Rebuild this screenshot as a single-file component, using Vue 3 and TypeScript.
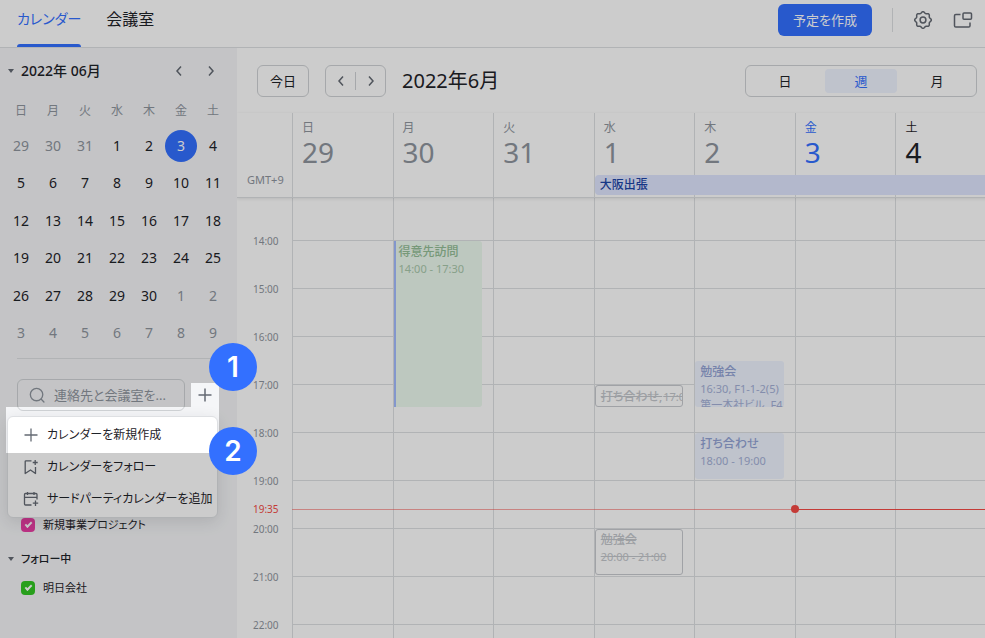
<script setup lang="ts">
import { ref } from 'vue'

interface CalEvent {
  title: string
  lines: string[]
  start: number
  end: number
  kind: 'green' | 'blue' | 'declined'
  compact?: boolean
}
interface Day {
  name: string
  num: number
  state: 'past' | 'today' | 'future'
  events: CalEvent[]
}

const weekNames = ['日', '月', '火', '水', '木', '金', '土']
const firstHour = 14
const hours = [14, 15, 16, 17, 18, 19, 20, 21, 22]

const miniDays = Array.from({ length: 42 }, (_, i) => {
  const offset = i - 2
  const num = offset < 1 ? offset + 31 : offset > 30 ? offset - 30 : offset
  return { key: i, num, other: offset < 1 || offset > 30, today: offset === 3 }
})

const days: Day[] = [
  { name: '日', num: 29, state: 'past', events: [] },
  {
    name: '月', num: 30, state: 'past',
    events: [{ title: '得意先訪問', lines: ['14:00 - 17:30'], start: 14, end: 17.5, kind: 'green' }],
  },
  { name: '火', num: 31, state: 'past', events: [] },
  {
    name: '水', num: 1, state: 'past',
    events: [
      { title: '打ち合わせ,', lines: ['17:00'], start: 17, end: 17.5, kind: 'declined', compact: true },
      { title: '勉強会', lines: ['20:00 - 21:00'], start: 20, end: 21, kind: 'declined' },
    ],
  },
  {
    name: '木', num: 2, state: 'past',
    events: [
      { title: '勉強会', lines: ['16:30, F1-1-2(5)', '第一本社ビル, F4-'], start: 16.5, end: 17.5, kind: 'blue' },
      { title: '打ち合わせ', lines: ['18:00 - 19:00'], start: 18, end: 19, kind: 'blue' },
    ],
  },
  { name: '金', num: 3, state: 'today', events: [] },
  { name: '土', num: 4, state: 'future', events: [] },
]

// Every hour is split into two half-hour tracks; track 1 is the strip above the first hour.
function track(hour: number): number {
  return (hour - firstHour) * 2 + 2
}

// Outline of the settings gear: a circle with eight soft lobes.
const gear = 'M' + Array.from({ length: 96 }, (_, i) => {
  const a = (i / 96) * Math.PI * 2
  const r = 7.6 + 0.7 * Math.cos(8 * a)
  return (10 + r * Math.sin(a)).toFixed(2) + ' ' + (10 - r * Math.cos(a)).toFixed(2)
}).join('L') + 'Z'

const view = ref('週')
const views = ['日', '週', '月']
const query = ref('')
const project = ref(true)
const company = ref(true)
</script>

<template>
  <div class="page">
    <header class="topbar">
      <nav class="tabs">
        <a href="#calendar" class="tab active">カレンダー</a>
        <a href="#rooms" class="tab">会議室</a>
      </nav>
      <div class="actions">
        <button class="create">予定を作成</button>
        <span class="sep"></span>
        <button class="icon-btn" aria-label="設定">
          <svg width="20" height="20" viewBox="0 0 20 20" fill="none" stroke="currentColor" stroke-width="1.5" stroke-linejoin="round">
            <path :d="gear" />
            <circle cx="10" cy="10" r="2.900" />
          </svg>
        </button>
        <button class="icon-btn" aria-label="別ウィンドウで開く">
          <svg width="20" height="20" viewBox="0 0 20 20" fill="none" stroke="currentColor" stroke-width="1.5" stroke-linejoin="round">
            <path d="M7.5 4.5 H2.8 Q1.5 4.5 1.5 5.8 V15.7 Q1.5 17 2.8 17 H15.7 Q17 17 17 15.7 V12.5" />
            <rect x="10" y="3" width="8.500" height="6.300" rx="1" />
          </svg>
        </button>
      </div>
    </header>

    <div class="body">
      <aside class="sidebar">
        <div class="mini-head">
          <span class="caret"></span>
          <h2>2022年 06月</h2>
          <button class="icon-btn small" aria-label="前の月">
            <svg width="10" height="12" viewBox="0 0 10 12" fill="none" stroke="currentColor" stroke-width="1.5"><path d="M7 1.5 L3 6 L7 10.5" /></svg>
          </button>
          <button class="icon-btn small" aria-label="次の月">
            <svg width="10" height="12" viewBox="0 0 10 12" fill="none" stroke="currentColor" stroke-width="1.5"><path d="M3 1.5 L7 6 L3 10.5" /></svg>
          </button>
        </div>
        <div class="mini-week">
          <span v-for="w in weekNames" :key="w">{{ w }}</span>
        </div>
        <div class="mini-days">
          <button v-for="d in miniDays" :key="d.key" class="mini-day" :class="{ other: d.other, today: d.today }">{{ d.num }}</button>
        </div>
        <hr class="rule" />
        <div class="find">
          <label class="search">
            <svg width="16" height="16" viewBox="0 0 18 18" fill="none" stroke="currentColor" stroke-width="1.5" stroke-linecap="round">
              <circle cx="8.500" cy="8.500" r="7" /><path d="M13.8 13.8 L16.8 16.8" />
            </svg>
            <input v-model="query" type="text" placeholder="連絡先と会議室を..." aria-label="連絡先と会議室を検索" />
          </label>
          <button class="icon-btn add" aria-label="追加">
            <svg width="14" height="14" viewBox="0 0 14 14" fill="none" stroke="currentColor" stroke-width="1.5"><path d="M7 0.5 V13.5 M0.5 7 H13.5" /></svg>
          </button>
          <div class="menu" role="menu">
            <button class="menu-item" role="menuitem">
              <svg width="16" height="16" viewBox="0 0 16 16" fill="none" stroke="currentColor" stroke-width="1.3"><path d="M8 1.5 V14.5 M1.5 8 H14.5" /></svg>
              カレンダーを新規作成
            </button>
            <button class="menu-item" role="menuitem">
              <svg width="16" height="16" viewBox="0 0 16 16" fill="none" stroke="currentColor" stroke-width="1.3" stroke-linejoin="round">
                <path d="M8.5 1.8 H3 Q2.2 1.8 2.2 2.6 V14.5 L7.5 11 L12.5 14.5 V8" /><path d="M12.2 1 V6 M9.7 3.5 H14.7" />
              </svg>
              カレンダーをフォロー
            </button>
            <button class="menu-item" role="menuitem">
              <svg width="16" height="16" viewBox="0 0 16 16" fill="none" stroke="currentColor" stroke-width="1.3">
                <path d="M8.5 14 H2.5 Q1.5 14 1.5 13 V3.5 Q1.5 2.5 2.5 2.5 H13 Q14 2.5 14 3.5 V8.5 M1.5 6.3 H14 M4.5 1 V4 M11 1 V4" /><path d="M12.5 9.5 V15 M9.8 12.2 H15.2" />
              </svg>
              サードパーティカレンダーを追加
            </button>
          </div>
        </div>
        <div class="mine">
          <label class="cal"><input v-model="project" class="pink" type="checkbox" />新規事業プロジェクト</label>
        </div>
        <h3 class="group"><span class="caret"></span>フォロー中</h3>
        <label class="cal"><input v-model="company" class="lime" type="checkbox" />明日会社</label>
      </aside>

      <main class="main">
        <div class="toolbar">
          <button class="boxed today-btn">今日</button>
          <div class="boxed pager">
            <button aria-label="前の週">
              <svg width="10" height="12" viewBox="0 0 10 12" fill="none" stroke="currentColor" stroke-width="1.5"><path d="M7 1.5 L3 6 L7 10.5" /></svg>
            </button>
            <button aria-label="次の週">
              <svg width="10" height="12" viewBox="0 0 10 12" fill="none" stroke="currentColor" stroke-width="1.5"><path d="M3 1.5 L7 6 L3 10.5" /></svg>
            </button>
          </div>
          <h1>2022年6月</h1>
          <div class="boxed segments">
            <button v-for="v in views" :key="v" :class="{ on: view === v }" @click="view = v">{{ v }}</button>
          </div>
        </div>

        <div class="week">
          <div class="week-head">
            <div class="zone">GMT+9</div>
            <div v-for="(d, i) in days" :key="d.num" class="day-head" :class="d.state" :style="{ gridColumn: i + 2 }">
              <span class="dow">{{ d.name }}</span>
              <span class="num">{{ d.num }}</span>
            </div>
            <div class="all-day">大阪出張</div>
          </div>
          <div class="week-body">
            <div class="hours">
              <span v-for="h in hours" :key="h" class="hour" :style="{ gridRow: track(h) }">{{ h }}:00</span>
            </div>
            <div v-for="d in days" :key="d.num" class="day-col">
              <i v-for="h in hours" :key="h" class="line" :style="{ gridRow: track(h) }"></i>
              <article
                v-for="e in d.events"
                :key="e.start"
                class="event"
                :class="[e.kind, { compact: e.compact }]"
                :style="{ gridRow: track(e.start) + ' / ' + track(e.end) }"
              >
                <strong>{{ e.title }}</strong>
                <span v-for="l in e.lines" :key="l">{{ l }}</span>
              </article>
            </div>
            <div class="now">
              <span class="now-label">19:35</span>
              <i class="now-past"></i>
              <i class="now-rest"></i>
            </div>
          </div>
        </div>
      </main>
    </div>

    <div class="shade"></div>
    <div class="step one">1</div>
    <div class="step two">2</div>
  </div>
</template>

<style>
body {
  margin: 0;
}
</style>

<style scoped>
.page {
  position: relative;
  display: flex;
  flex-direction: column;
  height: 100vh;
  overflow: hidden;
  background: #fff;
  color: #1f2329;
  font-family: "Noto Sans", "Noto Sans CJK JP", sans-serif;
  font-size: 14px;
  line-height: 20px;
  font-feature-settings: "palt";
}
.page * {
  box-sizing: border-box;
}
button,
input {
  margin: 0;
  padding: 0;
  border: 0;
  background: none;
  color: inherit;
  font: inherit;
  font-feature-settings: inherit;
}
h1,
h2,
h3 {
  margin: 0;
}
svg {
  display: block;
  flex: none;
}

.topbar {
  display: flex;
  flex: none;
  justify-content: space-between;
  height: 48px;
  padding: 0 12px 0 17px;
  border-bottom: 1px solid #dee0e3;
}
.tabs {
  display: flex;
  gap: 25px;
}
.tab {
  padding-top: 7px;
  color: #1f2329;
  font-size: 16px;
  line-height: 24px;
  text-decoration: none;
}
.tab.active {
  position: relative;
  color: #3370ff;
  font-size: 14px;
}
.tab.active::after {
  content: "";
  position: absolute;
  right: 0;
  bottom: 0;
  left: 0;
  height: 3px;
  border-radius: 3px 3px 0 0;
  background: #3370ff;
}
.actions {
  display: flex;
  align-items: center;
  padding-bottom: 7px;
}
.create {
  width: 94px;
  height: 32px;
  border-radius: 6px;
  background: #3370ff;
  color: #fff;
  font-size: 13px;
}
.sep {
  width: 1px;
  height: 24px;
  margin: 0 20px;
  background: #dee0e3;
}
.icon-btn {
  display: grid;
  place-items: center;
  width: 20px;
  height: 20px;
  color: #646a73;
}
.icon-btn + .icon-btn {
  margin-left: 20px;
}

.body {
  display: flex;
  flex: 1;
  min-height: 0;
}
.sidebar {
  flex: none;
  width: 237px;
  background: #f5f6f8;
}
.mini-head {
  display: flex;
  align-items: center;
  padding: 13px 16px 0 8px;
}
.mini-head h2 {
  flex: 1;
  padding-left: 7px;
  font-size: 14px;
  font-weight: 500;
  line-height: 20px;
}
.caret {
  width: 6px;
  height: 4px;
  background: #646a73;
  clip-path: polygon(0 0, 100% 0, 50% 100%);
}
.mini-head .icon-btn + .icon-btn {
  margin-left: 12px;
}
.mini-week,
.mini-days {
  display: grid;
  grid-template-columns: repeat(7, 32px);
  padding-left: 5px;
  justify-items: center;
  align-items: center;
}
.mini-week {
  height: 20px;
  margin-top: 20px;
  color: #8f959e;
  font-size: 12px;
}
.mini-days {
  grid-auto-rows: 1fr;
  height: 225px;
  margin-top: 6px;
}
.mini-day {
  width: 32px;
  height: 32px;
  border-radius: 50%;
}
.mini-day.other {
  color: #8f959e;
}
.mini-day.today {
  background: #3370ff;
  color: #fff;
}
.rule {
  margin: 6px 18px 0 17px;
  border: 0;
  border-top: 1px solid #dee0e3;
}
.find {
  position: relative;
  display: flex;
  align-items: center;
  gap: 10px;
  padding: 20px 22px 0 17px;
}
.search {
  display: flex;
  flex: 1;
  align-items: center;
  gap: 9px;
  min-width: 0;
  height: 32px;
  padding: 0 10px 0 11px;
  border: 1px solid #d0d3d6;
  border-radius: 6px;
  color: #8f959e;
  font-size: 13px;
}
.search input {
  flex: 1;
  min-width: 0;
  outline: 0;
}
.search input::placeholder {
  color: #8f959e;
  opacity: 1;
}
.menu {
  position: absolute;
  z-index: 2;
  top: 57px;
  left: 7px;
  display: grid;
  width: 211px;
  padding: 2px 0;
  border: 1px solid #dee0e3;
  border-radius: 6px;
  background: #fff;
  box-shadow: 0 4px 16px rgba(31, 35, 41, 0.12);
}
.menu-item {
  display: flex;
  align-items: center;
  gap: 8px;
  height: 32px;
  padding: 0 0 0 15px;
  font-size: 12px;
  text-align: left;
  white-space: nowrap;
}
.menu-item svg {
  color: #646a73;
}
.mine {
  margin-top: 104px;
}
.cal {
  display: flex;
  align-items: center;
  gap: 8px;
  padding-left: 21px;
  font-size: 11px;
}
.cal input {
  display: grid;
  flex: none;
  place-items: center;
  width: 14px;
  height: 14px;
  border-radius: 4px;
  appearance: none;
}
.cal input.pink {
  background: #eb3fa5;
}
.cal input.lime {
  background: #32c724;
}
.cal input:checked::before {
  content: "";
  width: 5px;
  height: 2px;
  margin-top: -2px;
  border-bottom: 2px solid #fff;
  border-left: 2px solid #fff;
  transform: rotate(-45deg);
}
.group {
  display: flex;
  align-items: center;
  gap: 7px;
  margin: 14px 0 9px;
  padding-left: 8px;
  font-size: 11px;
  font-weight: 500;
}

.main {
  display: flex;
  flex: 1;
  flex-direction: column;
  min-width: 0;
  overflow: hidden;
}
.toolbar {
  display: flex;
  flex: none;
  align-items: center;
  gap: 16px;
  padding: 17px 8px 16px 20px;
}
.boxed {
  height: 32px;
  border: 1px solid #d0d3d6;
  border-radius: 6px;
}
.today-btn {
  width: 52px;
  font-size: 13px;
}
.pager {
  display: flex;
  align-items: center;
  width: 61px;
  color: #646a73;
}
.pager button {
  display: grid;
  flex: 1;
  place-items: center;
  height: 18px;
}
.pager button + button {
  border-left: 1px solid #d0d3d6;
}
.toolbar h1 {
  font-size: 20px;
  font-weight: 400;
  line-height: 28px;
}
.segments {
  display: grid;
  grid-template-columns: repeat(3, 72px);
  gap: 4px;
  margin-left: auto;
  padding: 3px;
}
.segments button {
  border-radius: 4px;
  font-size: 13px;
}
.segments .on {
  background: #eff4ff;
  color: #3370ff;
}

.week {
  display: flex;
  flex: 1;
  flex-direction: column;
  min-height: 0;
  margin-right: -11px;
}
.week-head,
.week-body {
  display: grid;
  grid-template-columns: 55px repeat(7, minmax(0, 1fr));
}
.week-head {
  z-index: 1;
  flex: none;
  grid-template-rows: 62px 20px 2px;
  border-bottom: 1px solid #dee0e3;
  box-shadow: 0 1px 3px rgba(31, 35, 41, 0.1);
}
.zone {
  grid-area: 1 / 1 / 4 / 2;
  align-self: end;
  padding: 0 0 7px 10px;
  color: #8f959e;
  font-size: 11px;
}
.day-head {
  display: flex;
  grid-row: 1 / 4;
  flex-direction: column;
  padding: 5px 0 0 9px;
  border-left: 1px solid #dee0e3;
}
.past {
  color: #8f959e;
}
.today {
  color: #3370ff;
}
.dow {
  font-size: 12px;
}
.num {
  font-size: 28px;
  line-height: 28px;
}
.all-day {
  z-index: 1;
  grid-area: 2 / 5 / 3 / 9;
  margin-left: 1px;
  padding-left: 5px;
  border-radius: 4px;
  background: #e0e7ff;
  color: #1d45a8;
  font-size: 12px;
  font-weight: 500;
  line-height: 20px;
}
.week-body {
  position: relative;
  flex: 1;
  min-height: 0;
}
.hours,
.day-col {
  display: grid;
  grid-template-rows: 42px repeat(18, 24px);
}
.hour,
.now-label {
  color: #8f959e;
  font-size: 10px;
  line-height: 16px;
}
.hour {
  margin: -7px 0 0 16px;
}
.day-col {
  grid-template-columns: minmax(0, 1fr);
  border-left: 1px solid #dee0e3;
}
.line {
  grid-column: 1;
  height: 1px;
  background: #dee0e3;
}
.event {
  z-index: 1;
  display: flex;
  grid-column: 1;
  flex-direction: column;
  margin: 1px 11px 1px 0;
  padding: 2px 0 0 5px;
  overflow: hidden;
  border-radius: 3px;
  font-size: 11px;
  line-height: 16px;
  white-space: nowrap;
}
.event strong {
  flex: none;
  font-size: 12px;
  font-weight: 500;
  line-height: 18px;
}
.event span {
  flex: none;
}
.green {
  padding-left: 3px;
  border-left: 2px solid #a4bcff;
  border-radius: 0 3px 3px 0;
  background: #edfaef;
  color: #a9c9ac;
}
.green strong {
  color: #95c098;
}
.blue {
  background: #eff4ff;
  color: #a5b1d8;
}
.blue strong {
  color: #94a4d6;
}
.declined {
  padding-top: 1px;
  border: 1px solid #c8cbd0;
  background: #fff;
  color: #c4c7cc;
  text-decoration: line-through;
}
.compact {
  flex-direction: row;
  align-items: center;
  gap: 1px;
}
.now {
  position: absolute;
  top: 303px;
  right: 0;
  left: 0;
  display: grid;
  grid-template-columns: 55px 5fr 2fr;
  align-items: center;
}
.now-label {
  margin-left: 16px;
  color: #f54a45;
}
.now-past {
  height: 1px;
  background: #f54a45;
  opacity: 0.5;
}
.now-rest {
  position: relative;
  height: 1px;
  background: #f54a45;
}
.now-rest::before {
  content: "";
  position: absolute;
  z-index: 2;
  top: -4px;
  left: -4px;
  width: 8px;
  height: 8px;
  border-radius: 50%;
  background: #f54a45;
}

.shade {
  position: absolute;
  z-index: 5;
  inset: 0;
  background: rgba(0, 0, 0, 0.2);
  clip-path: polygon(evenodd, 0 0, 100% 0, 100% 100%, 0 100%, 0 0, 191px 383px, 219px 383px, 219px 453px, 6px 453px, 6px 407px, 191px 407px, 191px 383px, 0 0);
  pointer-events: none;
}
.step {
  position: absolute;
  z-index: 6;
  left: 209px;
  display: grid;
  place-items: center;
  width: 48px;
  height: 48px;
  border-radius: 50%;
  background: #3370ff;
  color: #fff;
  font-family: Inter, sans-serif;
  font-size: 28px;
  font-weight: 600;
}
.one {
  top: 343px;
}
.two {
  top: 427px;
}
</style>
